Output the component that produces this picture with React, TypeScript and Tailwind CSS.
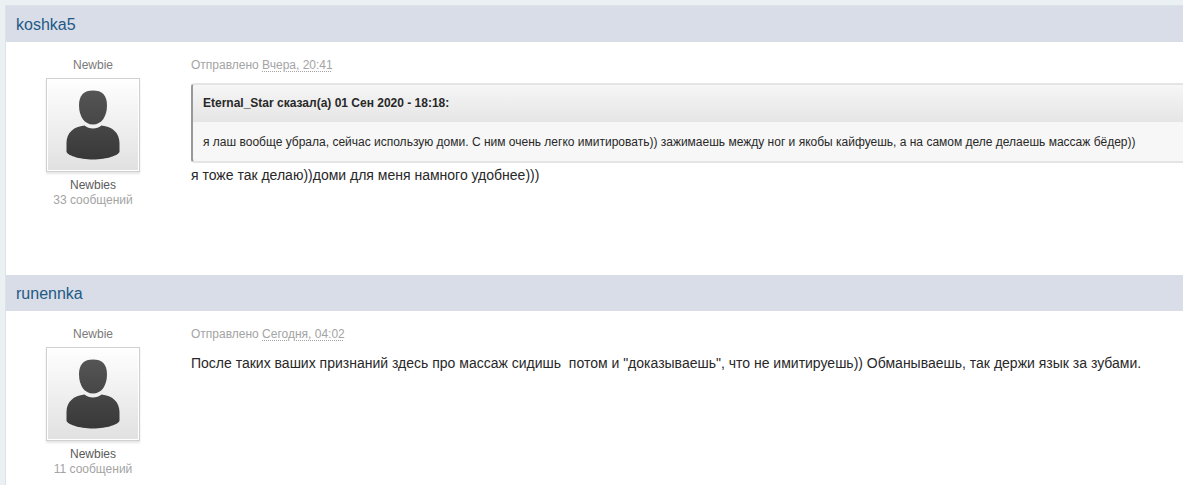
import React from "react";

interface Quote {
  title: string;
  text: string;
}

interface Post {
  author: string;
  rank: string;
  group: string;
  count: string;
  date: string;
  text: string;
  quote?: Quote;
}

const posts: Post[] = [
  {
    author: "koshka5",
    rank: "Newbie",
    group: "Newbies",
    count: "33 сообщений",
    date: "Вчера, 20:41",
    quote: {
      title: "Eternal_Star сказал(а) 01 Сен 2020 - 18:18:",
      text: "я лаш вообще убрала, сейчас использую доми. С ним очень легко имитировать)) зажимаешь между ног и якобы кайфуешь, а на самом деле делаешь массаж бёдер))",
    },
    text: "я тоже так делаю))доми для меня намного удобнее)))",
  },
  {
    author: "runennka",
    rank: "Newbie",
    group: "Newbies",
    count: "11 сообщений",
    date: "Сегодня, 04:02",
    text: 'После таких ваших признаний здесь про массаж сидишь \u00a0потом и "доказываешь", что не имитируешь)) Обманываешь, так держи язык за зубами.',
  },
];

const Avatar: React.FunctionComponent<{ id: string }> = ({ id }) => (
  <div className="border border-[#d0d0d0] bg-white p-px shadow-[0_2px_2px_rgba(0,0,0,0.1)]">
    <svg width="90" height="90" viewBox="0 0 90 90" className="block">
      <defs>
        <linearGradient id={`${id}-bg`} x1="0" y1="0" x2="0" y2="1">
          <stop offset="0" stopColor="#fefefe" />
          <stop offset="1" stopColor="#e1e1e1" />
        </linearGradient>
        <linearGradient
          id={`${id}-fg`}
          gradientUnits="userSpaceOnUse"
          x1="0"
          y1="10"
          x2="0"
          y2="80"
        >
          <stop offset="0" stopColor="#555555" />
          <stop offset="1" stopColor="#383838" />
        </linearGradient>
      </defs>
      <rect width="90" height="90" fill={`url(#${id}-bg)`} />
      <g fill={`url(#${id}-fg)`}>
        <path d="M45 10.500C54 10.500 59 15 59 25.500C59 36.500 53.500 44.500 45 44.500S31 36.500 31 25.500C31 15 36 10.500 45 10.500Z" />
        <path d="M36.500 45.500C41 49.500 49 49.500 53.500 45.500C64.500 46.500 71.500 53 71.500 63V71.500C71.500 75 59 79.500 45 79.500S18.500 75 18.500 71.500V63C18.500 53 25.500 46.500 36.500 45.500Z" />
      </g>
    </svg>
  </div>
);

const PostBlock: React.FunctionComponent<{ post: Post }> = ({ post }) => (
  <article>
    <h3 className="bg-[#d9dde7] px-2.5 pt-[7px] pb-[5px] text-base leading-6 text-[#225985]">
      <a href="#">{post.author}</a>
    </h3>
    <div className="flex min-h-[233px] pt-4 pl-2.5">
      <div className="flex w-[154px] shrink-0 flex-col items-center text-xs leading-[15px] text-[#a4a4a4]">
        <p className="mb-[5px] text-[#7a7a7a]">{post.rank}</p>
        <Avatar id={post.author} />
        <p className="mt-1.5 text-[#5a5a5a]">{post.group}</p>
        <p>{post.count}</p>
      </div>
      <div className="ml-[21px] min-w-0 flex-1 text-[#282828]">
        <p className="text-xs leading-[15px] text-[#a4a4a4]">
          Отправлено{" "}
          <abbr className="underline decoration-dotted decoration-1 underline-offset-2">
            {post.date}
          </abbr>
        </p>
        <div className="mt-2.5 text-sm leading-[22px]">
          {post.quote && (
            <blockquote className="mb-px overflow-hidden rounded-l-[4px] border-y-2 border-l-2 border-y-[#e4e4e4] border-l-[#989898] bg-[#f7f7f7] text-xs">
              <p className="bg-linear-to-b from-[#f6f6f6] to-[#e5e5e5] px-2.5 py-2 font-bold leading-[21px]">
                {post.quote.title}
              </p>
              <p className="px-2.5 pt-[11px] pb-[9px] leading-[19px]">
                {post.quote.text}
              </p>
            </blockquote>
          )}
          <p>{post.text}</p>
        </div>
      </div>
    </div>
  </article>
);

const App: React.FunctionComponent<{}> = () => (
  <div className="h-screen overflow-hidden bg-[#ebf0f3] pt-[5px] pl-[5px] font-['Liberation_Sans',Arial,sans-serif]">
    <main className="border-t border-l border-[#dbe2e8] bg-white">
      {posts.map((post) => (
        <PostBlock key={post.author} post={post} />
      ))}
    </main>
  </div>
);

export default App;
